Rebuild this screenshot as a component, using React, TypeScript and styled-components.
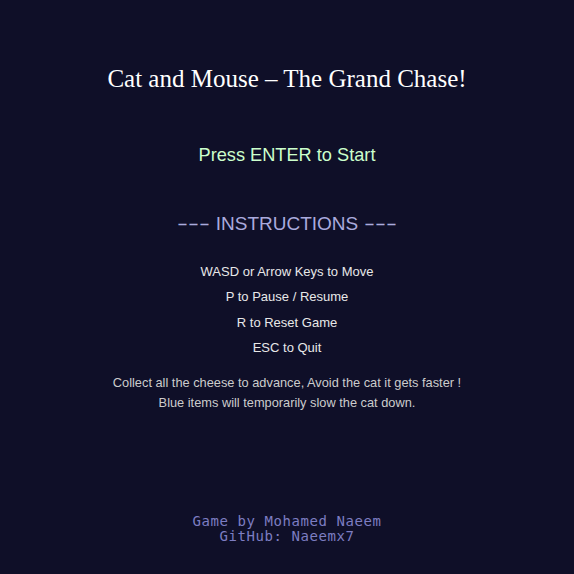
import React from "react";
import styled, { createGlobalStyle } from "styled-components";

const Global = createGlobalStyle`
  html, body { margin: 0; padding: 0; background: #0f0f28; }
  #root { min-height: 574px; }
`;

const Screen = styled.div`
  width: 574px;
  height: 574px;
  background: #0f0f28;
  display: flex;
  flex-direction: column;
  align-items: center;
  padding-top: 64px;
  box-sizing: border-box;
  text-align: center;
`;

const Title = styled.h1`
  margin: 0;
  font-family: "Liberation Serif", "Times New Roman", serif;
  font-weight: 400;
  font-size: 25px;
  line-height: 30px;
  color: #ffffff;
`;

const Prompt = styled.div`
  margin-top: 49px;
  font-family: "Liberation Sans", Arial, sans-serif;
  font-size: 18.2px;
  line-height: 24px;
  color: #ccffcc;
`;

const Heading = styled.div`
  margin-top: 45px;
  font-family: "Liberation Sans", Arial, sans-serif;
  font-size: 19px;
  line-height: 24px;
  color: #aaaadd;
  white-space: nowrap;
`;

const Dashes = styled.span`
  display: inline-block;
  transform: scaleX(1.73);
  transform-origin: center;
  margin: 0 7px;
`;

const KeyList = styled.div`
  margin-top: 23px;
  display: flex;
  flex-direction: column;
  align-items: center;
`;

const KeyLine = styled.div`
  font-family: "Liberation Sans", Arial, sans-serif;
  font-size: 13px;
  line-height: 25.3px;
  color: #e8e8e8;
`;

const Note = styled.div`
  margin-top: 13px;
  font-family: "Liberation Sans", Arial, sans-serif;
  font-size: 12.8px;
  line-height: 20px;
  color: #cccccc;
`;

const Credits = styled.div`
  margin-top: 101px;
  font-family: "DejaVu Sans Mono", "Liberation Mono", monospace;
  font-size: 14px;
  letter-spacing: 0.57px;
  line-height: 15px;
  color: #7d7dc2;
`;

const CreditLine = styled.div`
  height: 15px;
`;

export default function App() {
  return (
    <>
      <Global />
      <Screen>
        <Title>Cat and Mouse – The Grand Chase!</Title>
        <Prompt>Press ENTER to Start</Prompt>
        <Heading>
          <Dashes>---</Dashes> INSTRUCTIONS <Dashes>---</Dashes>
        </Heading>
        <KeyList>
          <KeyLine>WASD or Arrow Keys to Move</KeyLine>
          <KeyLine>P to Pause / Resume</KeyLine>
          <KeyLine>R to Reset Game</KeyLine>
          <KeyLine>ESC to Quit</KeyLine>
        </KeyList>
        <Note>
          Collect all the cheese to advance, Avoid the cat it gets faster !
          <br />
          Blue items will temporarily slow the cat down.
        </Note>
        <Credits>
          <CreditLine>Game by Mohamed Naeem</CreditLine>
          <CreditLine>GitHub: Naeemx7</CreditLine>
        </Credits>
      </Screen>
    </>
  );
}
